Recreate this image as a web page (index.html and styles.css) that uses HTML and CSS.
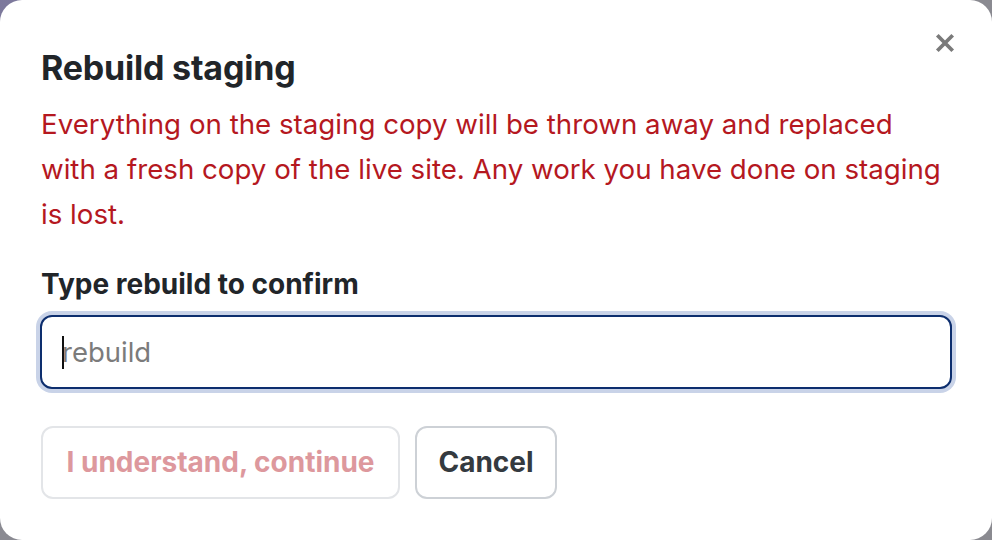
FILE: index.html
```html
<!DOCTYPE html>
<html lang="en">
<head>
<meta charset="utf-8">
<title>Rebuild staging</title>
<link rel="stylesheet" href="styles.css">
</head>
<body>
<div class="modal">
  <button class="close" aria-label="Close">
    <svg viewBox="0 0 20 20" width="22" height="22"><path d="M3 3 L17 17 M17 3 L3 17" stroke="#7a7a7a" stroke-width="3.4" stroke-linecap="butt"/></svg>
  </button>
  <h2 class="title">Rebuild staging</h2>
  <p class="warning">Everything on the staging copy will be thrown away and replaced with a fresh copy of the live site. Any work you have done on staging is lost.</p>
  <label class="label" for="confirm">Type rebuild to confirm</label>
  <div class="field">
    <span class="caret"></span>
    <input id="confirm" class="input" type="text" placeholder="rebuild">
  </div>
  <div class="actions">
    <button class="btn btn-danger" disabled>I understand, continue</button>
    <button class="btn btn-cancel">Cancel</button>
  </div>
</div>
</body>
</html>
```
FILE: styles.css
```css
* { box-sizing: border-box; }
html, body { margin: 0; height: 100%; }
body {
  background: linear-gradient(135deg, #7c789c 0%, #8a8a92 20%, #8a8a90 100%);
  font-family: Inter, "Liberation Sans", sans-serif;
  overflow: hidden;
}
.modal {
  position: relative;
  width: 992px;
  height: 540px;
  background: #fff;
  border-radius: 22px;
  padding: 48px 40px 0 41px;
}
.close {
  position: absolute;
  top: 32px;
  right: 36px;
  border: 0;
  background: none;
  padding: 0;
  width: 22px;
  height: 22px;
  display: flex;
}
.title {
  margin: 0;
  font-size: 34px;
  line-height: 40px;
  font-weight: 700;
  color: #212529;
  letter-spacing: -0.2px;
}
.warning {
  margin: 14px 0 0;
  font-size: 27.7px;
  line-height: 45px;
  color: #b5181f;
  max-width: 910px;
}
.label {
  display: block;
  margin-top: 30px;
  font-size: 28px;
  line-height: 34px;
  font-weight: 700;
  color: #212529;
}
.field {
  position: relative;
  margin-top: 14px;
  margin-left: -1px;
  width: 912px;
}
.input {
  display: block;
  width: 100%;
  height: 74px;
  border: 2px solid #0d2e6e;
  border-radius: 12px;
  box-shadow: 0 0 0 4px #c9d3e8;
  padding: 0 20px;
  font-family: inherit;
  font-size: 27.5px;
  color: #212529;
  background: #fff;
  outline: none;
}
.input::placeholder { color: #7b7b7b; }
.caret {
  position: absolute;
  left: 22px;
  top: 21px;
  width: 2px;
  height: 33px;
  background: #111;
}
.actions {
  display: flex;
  gap: 15px;
  margin-top: 37px;
}
.btn {
  height: 73px;
  border-radius: 12px;
  background: #fff;
  font-family: inherit;
  font-size: 28px;
  font-weight: 700;
  padding: 0 20px 2px;
}
.btn-danger {
  width: 359px;
  border: 2px solid #e3e5e8;
  color: #dd989d;
}
.btn-cancel {
  width: 142px;
  border: 2px solid #cdd1d6;
  color: #343a40;
}
```
